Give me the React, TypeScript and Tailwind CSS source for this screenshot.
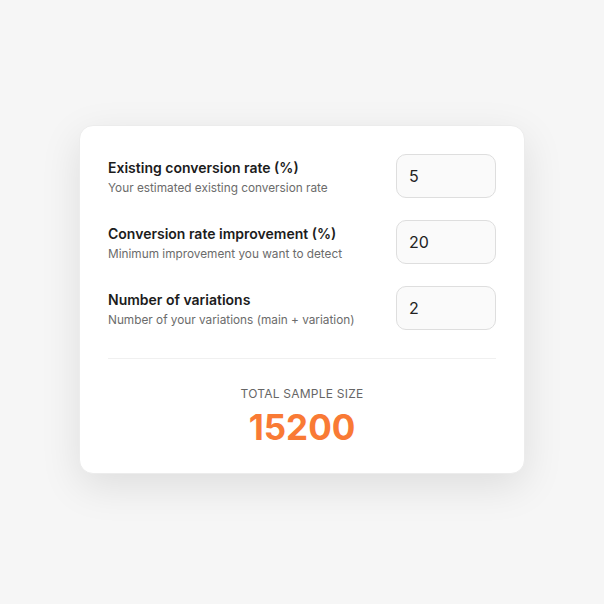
import React from "react";

type Field = {
  label: string;
  hint: string;
  value: string;
};

const fields: Field[] = [
  { label: "Existing conversion rate (%)", hint: "Your estimated existing conversion rate", value: "5" },
  { label: "Conversion rate improvement (%)", hint: "Minimum improvement you want to detect", value: "20" },
  { label: "Number of variations", hint: "Number of your variations (main + variation)", value: "2" },
];

export default function App() {
  return (
    <div
      className="flex h-[604px] w-[604px] items-center justify-center bg-[#f6f6f6] pb-[6px]"
      style={{ fontFamily: "Inter, 'Noto Sans', sans-serif" }}
    >
      <div className="w-[446px] rounded-[14px] border border-[#ececec] bg-white px-7 pt-7 pb-[24px] shadow-[0_12px_40px_rgba(0,0,0,0.10)]">
        <div className="flex flex-col gap-[22px]">
          {fields.map((f) => (
            <div key={f.label} className="flex items-center justify-between">
              <div className="mt-[4px]">
                <p className="text-[14px] font-semibold leading-5 text-[#1c1c1c]">{f.label}</p>
                <p className="text-[11.8px] leading-5 text-[#6b6b6b]">{f.hint}</p>
              </div>
              <input
                defaultValue={f.value}
                className="h-[44px] w-[100px] rounded-[10px] border border-[#dedede] bg-[#fafafa] px-3 text-[16px] text-[#222] outline-none"
              />
            </div>
          ))}
        </div>

        <div className="mt-[28px] border-t border-[#f0f0f0]" />

        <div className="mt-[26px] flex flex-col items-center">
          <p className="text-[12px] uppercase tracking-[0.02em] text-[#666]">Total sample size</p>
          <p className="mt-[2px] text-[35px] font-bold leading-[44px] text-[#f97a35]">15200</p>
        </div>
      </div>
    </div>
  );
}
